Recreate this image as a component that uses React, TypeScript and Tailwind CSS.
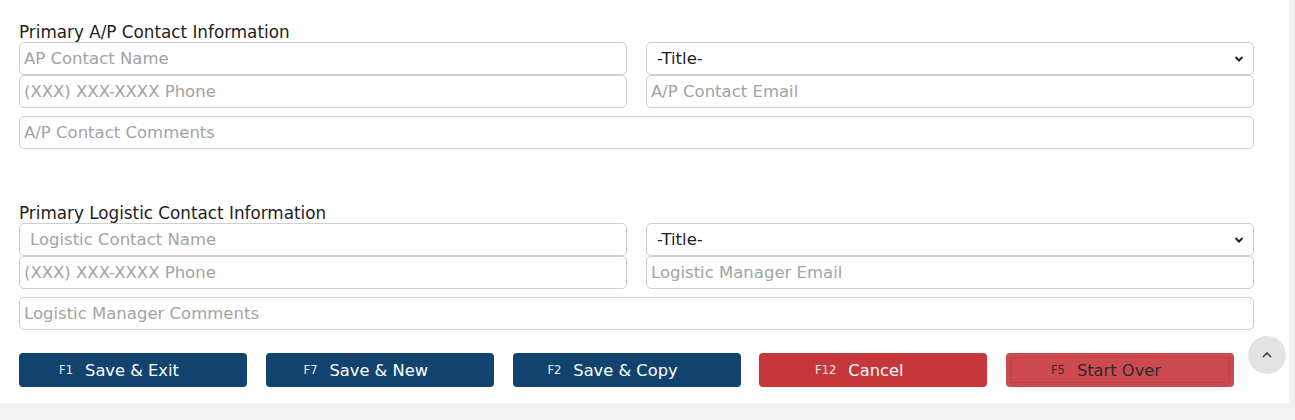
import React from "react";

const font = { fontFamily: '"DejaVu Sans", Verdana, sans-serif' };

function Field({ placeholder, extra = "" }: { placeholder: string; extra?: string }) {
  return (
    <div className={`h-[33px] rounded-[5px] border border-[#cfcfcf] bg-white flex items-center px-[4px] pt-[2px] text-[16.5px] text-[#a3a3a3] ${extra}`}>
      {placeholder}
    </div>
  );
}

function TitleSelect() {
  return (
    <div className="h-[33px] rounded-[5px] border border-[#cfcfcf] bg-white flex items-center justify-between pl-[10px] pr-[9px] text-[16.5px] text-[#222]">
      <span className="pt-[2px]">-Title-</span>
      <svg width="10" height="8" viewBox="0 0 10 8">
        <path d="M1.5 2 L5 5.5 L8.5 2" stroke="#222" strokeWidth="2" fill="none" />
      </svg>
    </div>
  );
}

function Section({ title, name, namePad, email, comments }: { title: string; name: string; namePad?: boolean; email: string; comments: string }) {
  return (
    <div>
      <div className="text-[16.8px] leading-[20px] pt-[1px] h-[21px] text-[#222]">{title}</div>
      <div className="grid grid-cols-2 gap-x-[19px]">
        <Field placeholder={name} extra={namePad ? "pl-[10px]" : ""} />
        <TitleSelect />
        <Field placeholder="(XXX) XXX-XXXX Phone" />
        <Field placeholder={email} />
      </div>
      <div className="mt-[8px]">
        <Field placeholder={comments} />
      </div>
    </div>
  );
}

function Btn({ k, label, cls }: { k: string; label: string; cls: string }) {
  return (
    <div className={`w-[228px] h-[34px] rounded-[4px] flex items-center justify-center pr-[28px] pt-[2px] ${cls}`}>
      <span className="text-[11.5px] mr-[12px] opacity-90">{k}</span>
      <span className="text-[16.3px]">{label}</span>
    </div>
  );
}

export default function App() {
  return (
    <div className="w-[1295px] h-[420px] bg-[#f1f1f1]" style={font}>
      <div className="relative w-[1289px] h-[403px] bg-white pl-[19px] pr-[35px] pt-[21px]">
        <Section title="Primary A/P Contact Information" name="AP Contact Name" email="A/P Contact Email" comments="A/P Contact Comments" />
        <div className="mt-[53px]">
          <Section title="Primary Logistic Contact Information" name="Logistic Contact Name" namePad email="Logistic Manager Email" comments="Logistic Manager Comments" />
        </div>
        <div className="flex gap-[18.75px] mt-[23px]">
          <Btn k="F1" label="Save & Exit" cls="bg-[#12436f] text-white" />
          <Btn k="F7" label="Save & New" cls="bg-[#12436f] text-white" />
          <Btn k="F2" label="Save & Copy" cls="bg-[#12436f] text-white" />
          <Btn k="F12" label="Cancel" cls="bg-[#c6363a] text-white" />
          <Btn k="F5" label="Start Over" cls="bg-[#cc4a4f] text-[#2a2a2a] outline-1 outline-dotted outline-[#a84444] outline-offset-[-5px]" />
        </div>
        <div className="absolute left-[1248px] top-[336px] w-[38px] h-[38px] rounded-full bg-[#e3e3e5] flex items-center justify-center">
          <svg width="12" height="8" viewBox="0 0 12 8">
            <path d="M2 6 L6 2 L10 6" stroke="#444" strokeWidth="1.6" fill="none" />
          </svg>
        </div>
      </div>
    </div>
  );
}
